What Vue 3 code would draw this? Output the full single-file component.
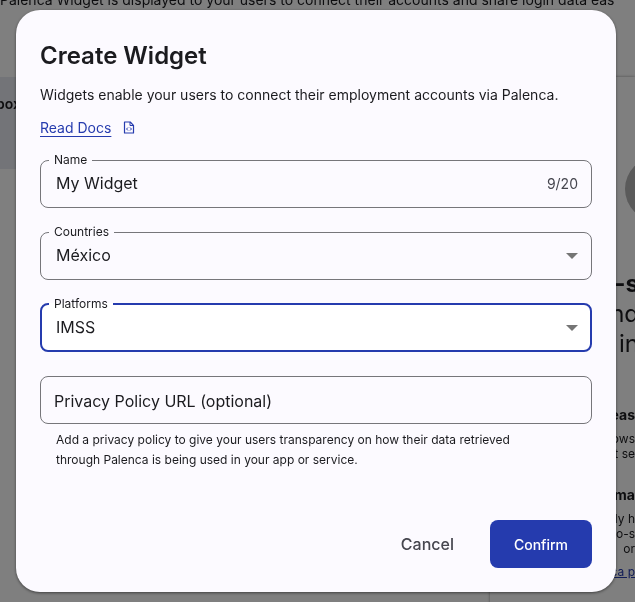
<template>
  <div class="page">
    <p class="intro">Palenca Widget is displayed to your users to connect their accounts and share login data eas</p>
    <div class="columns">
      <div class="sandbox">box</div>
      <div class="plans">
        <div class="avatar"></div>
        <h3>-s</h3>
        <p class="lead">nd<br>in</p>
        <h4>eas</h4>
        <p class="note">ows<br>t se</p>
        <h4>rma</h4>
        <p class="note">ly h<br>o-s<br>or</p>
        <a href="#">ca p</a>
      </div>
    </div>
  </div>

  <div class="overlay">
    <form class="dialog" role="dialog" aria-labelledby="dialog-title" @submit.prevent>
      <h2 id="dialog-title">Create Widget</h2>
      <p class="description">Widgets enable your users to connect their employment accounts via Palenca.</p>
      <a class="docs" href="#">
        <span>Read Docs</span>
        <svg width="12" height="14" viewBox="0 0 12 14" fill="none" stroke="currentColor">
          <path d="M1.5 1h5.7l3.3 3.3V12h-9z" stroke-width="1.2" stroke-linejoin="round" />
          <path d="M7 1v3.5h3.5" stroke-width="1" />
          <path d="M5 6.5 3.5 8 5 9.5M7 6.5 8.5 8 7 9.5" stroke-width="1" />
        </svg>
      </a>

      <div class="fields">
        <fieldset class="field">
          <legend><label for="name">Name</label></legend>
          <div class="control">
            <input id="name" v-model="name" type="text" :maxlength="maxName">
            <span class="counter">{{ name.length }}/{{ maxName }}</span>
          </div>
        </fieldset>

        <fieldset
          v-for="item in selects"
          :key="item.id"
          class="field"
          :class="{ active: active === item.id }"
        >
          <legend><label :for="item.id">{{ item.label }}</label></legend>
          <div class="control">
            <select :id="item.id" v-model="item.value" @focus="active = item.id">
              <option v-for="option in item.options" :key="option">{{ option }}</option>
            </select>
            <svg class="arrow" width="12" height="6" viewBox="0 0 12 6">
              <path d="M0 0h12L6 6z" fill="#757575" />
            </svg>
          </div>
        </fieldset>
      </div>

      <input
        v-model="privacyUrl"
        class="privacy"
        type="text"
        placeholder="Privacy Policy URL (optional)"
        aria-label="Privacy Policy URL (optional)"
        aria-describedby="privacy-help"
      >
      <p id="privacy-help" class="helper">
        Add a privacy policy to give your users transparency on how their data retrieved through Palenca is being used in your app or service.
      </p>

      <div class="actions">
        <button type="button" class="cancel">Cancel</button>
        <button type="submit" class="confirm">Confirm</button>
      </div>
    </form>
  </div>
</template>

<script setup>
import { reactive, ref } from 'vue';

const maxName = 20;
const name = ref('My Widget');
const privacyUrl = ref('');
const active = ref('platforms');

const selects = reactive([
  { id: 'countries', label: 'Countries', value: 'México', options: ['México'] },
  { id: 'platforms', label: 'Platforms', value: 'IMSS', options: ['IMSS'] }
]);
</script>

<style>
body {
  margin: 0;
  background: #fff;
}
</style>

<style scoped>
.page,
.overlay {
  box-sizing: border-box;
  font-family: Inter, "Liberation Sans", sans-serif;
  color: #1b1b1f;
}

/* page behind the dialog */
.page {
  position: fixed;
  inset: 0;
  overflow: hidden;
}

.page p,
.page h3,
.page h4 {
  margin: 0;
}

.page .intro {
  height: 77px;
  margin-top: -10px;
  font-size: 14px;
  line-height: 20px;
  white-space: nowrap;
}

.columns {
  display: flex;
  justify-content: space-between;
  align-items: flex-start;
  margin-top: 10px;
}

.sandbox {
  width: 460px;
  height: 92px;
  background: #e6e9f0;
  font-size: 14px;
  font-weight: 600;
  line-height: 54px;
  text-indent: -4px;
}

.plans {
  width: 145px;
  min-height: 560px;
  box-shadow: 0 0 3px rgba(0, 0, 0, 0.4);
  text-align: right;
}

.avatar {
  width: 64px;
  height: 64px;
  margin: 80px -54px 48px auto;
  border-radius: 50%;
  background: #b4b4b4;
}

.plans h3,
.plans .lead {
  margin-right: -4px;
  font-size: 24px;
  line-height: 30px;
}

.plans h4 {
  padding-top: 46px;
  font-size: 14px;
  line-height: 20px;
}

.note {
  font-size: 12px;
  line-height: 15px;
}

.plans .note {
  padding-top: 6px;
}

.plans .note + h4 {
  padding-top: 24px;
}

.plans a {
  display: block;
  padding-top: 8px;
  font-size: 12px;
  line-height: 16px;
  color: #253bae;
}

/* dialog */
.overlay {
  position: relative;
  min-height: 100vh;
  padding: 10px 16px;
  background: rgba(0, 0, 0, 0.5);
}

.dialog {
  box-sizing: border-box;
  max-width: 600px;
  padding: 24px;
  border-radius: 24px;
  background: #fcfaff;
  box-shadow: 0 1px 3px rgba(0, 0, 0, 0.5);
}

h2 {
  margin: 0;
  font-size: 24px;
  font-weight: 600;
  line-height: 44px;
}

.description {
  margin: 8px 0 14px;
  font-size: 14px;
  line-height: 18px;
}

.docs {
  display: flex;
  align-items: center;
  gap: 12px;
  width: fit-content;
  font-size: 14px;
  line-height: 20px;
  color: #253bae;
  text-decoration: none;
}

.docs span {
  text-decoration: underline;
  text-decoration-thickness: 1px;
  text-underline-offset: 3px;
}

.fields {
  display: flex;
  flex-direction: column;
  gap: 16px;
  padding: 14px 0 24px;
}

.field {
  box-sizing: border-box;
  height: 56px;
  min-width: 0;
  margin: 0;
  padding: 0 8px;
  border: 1px solid #76767a;
  border-radius: 8px;
}

.field.active {
  padding: 0 7px;
  border: 2px solid #253bae;
  background: #fff;
}

legend {
  padding: 0 5px;
  font-size: 12px;
  line-height: 16px;
}

.control {
  position: relative;
  display: flex;
  align-items: center;
  height: 30px;
}

.control input,
.control select {
  flex: 1;
  min-width: 0;
  height: 30px;
  padding: 0 7px;
  border: 0;
  outline: 0;
  appearance: none;
  background: transparent;
  color: inherit;
  font: inherit;
  font-size: 16px;
}

.counter {
  padding-right: 5px;
  font-size: 14px;
  color: #46464f;
}

.arrow {
  position: absolute;
  top: 13px;
  right: 5px;
  pointer-events: none;
}

.privacy {
  display: block;
  box-sizing: border-box;
  width: 100%;
  height: 48px;
  padding: 2px 13px 0;
  border: 1px solid #76767a;
  border-radius: 8px;
  outline: 0;
  background: transparent;
  color: inherit;
  font: inherit;
  font-size: 16px;
}

.privacy::placeholder {
  color: #1b1b1f;
  opacity: 1;
}

.helper {
  margin: 6px 48px 50px 16px;
  font-size: 12px;
  line-height: 20px;
}

.actions {
  display: flex;
  justify-content: flex-end;
  gap: 12px;
}

button {
  height: 48px;
  padding: 0 24px;
  border: 0;
  border-radius: 8px;
  background: transparent;
  font-family: inherit;
  font-weight: 500;
  cursor: pointer;
}

.cancel {
  color: #46464f;
  font-size: 16px;
}

.confirm {
  background: #253bae;
  color: #fff;
  font-size: 14px;
}
</style>
